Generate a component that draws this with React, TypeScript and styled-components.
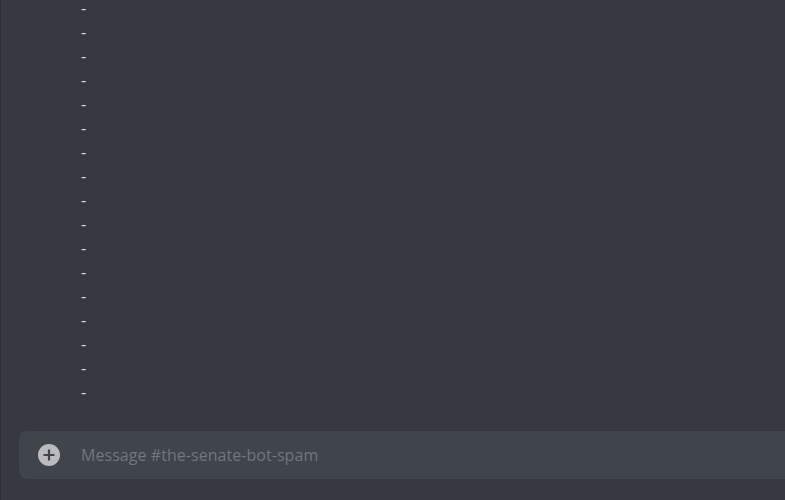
import React from 'react'
import styled, { createGlobalStyle } from 'styled-components'

const GlobalStyle = createGlobalStyle`
  html, body {
    margin: 0;
    padding: 0;
    background: #36393f;
    overflow: hidden;
  }
  body {
    font-family: "Open Sans", "Noto Sans", sans-serif;
  }
`

const Chat = styled.main`
  width: 820px;
  height: 500px;
  display: flex;
  flex-direction: column;
  background: #36393f;
  border-left: 1px solid #2f3136;
  box-sizing: border-box;
`

const Messages = styled.ul`
  flex: 1;
  margin: 0;
  padding: 0 0 27px;
  list-style: none;
  overflow: hidden;
  display: flex;
  flex-direction: column;
  justify-content: flex-end;
`

const Line = styled.li`
  padding-left: 80px;
  font-size: 16px;
  line-height: 24px;
  color: #dcddde;
  white-space: pre;
`

const Form = styled.form`
  padding: 0 0 0 18px;
  margin-bottom: 21px;
`

const InputBar = styled.div`
  height: 48px;
  display: flex;
  align-items: center;
  background: #40444b;
  border-radius: 8px;
  padding-left: 18px;
  gap: 20px;
`

const AttachButton = styled.button`
  width: 24px;
  height: 24px;
  padding: 0;
  border: none;
  background: none;
  display: flex;
  cursor: pointer;
`

const Placeholder = styled.span`
  font-size: 16px;
  color: #72767d;
  letter-spacing: 0.05px;
`

const PlusIcon = () => (
  <svg width="24" height="24" viewBox="0 0 24 24">
    <circle cx="12" cy="12" r="11" fill="#b9bbbe" />
    <path d="M12 6.5v11M6.5 12h11" stroke="#40444b" strokeWidth="2.2" />
  </svg>
)

export default function App() {
  const lines = Array.from({ length: 18 }, (_, i) => i)
  return (
    <>
      <GlobalStyle />
      <Chat>
        <Messages>
          {lines.map(i => (
            <Line key={i}>-</Line>
          ))}
        </Messages>
        <Form>
          <InputBar>
            <AttachButton type="button">
              <PlusIcon />
            </AttachButton>
            <Placeholder>Message #the-senate-bot-spam</Placeholder>
          </InputBar>
        </Form>
      </Chat>
    </>
  )
}
